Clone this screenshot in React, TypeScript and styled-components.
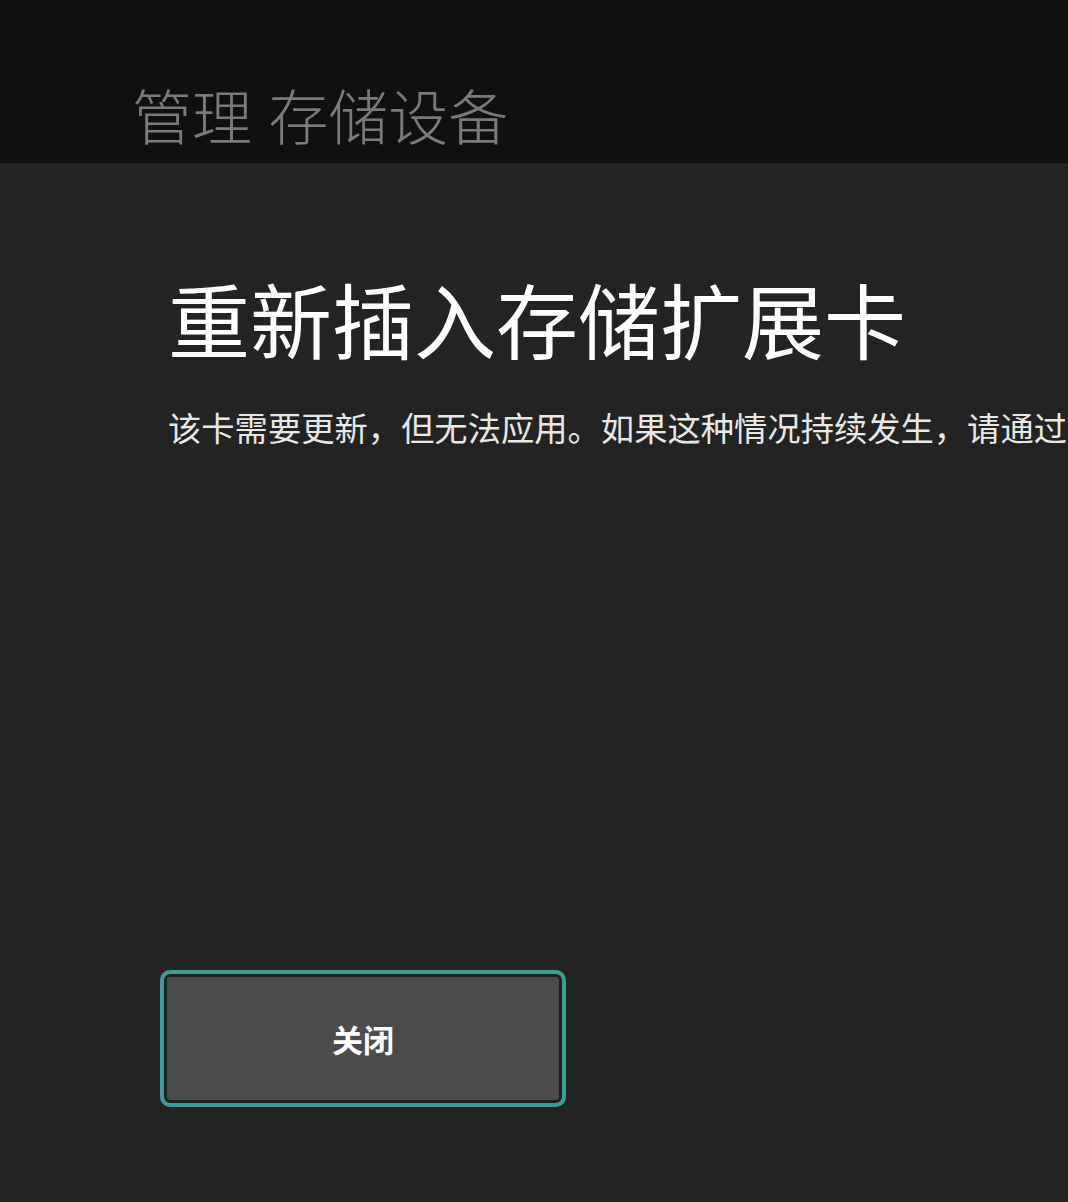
import React from "react";
import styled, { createGlobalStyle } from "styled-components";

const Global = createGlobalStyle`
  html, body { margin: 0; padding: 0; background: #232323; }
  body { font-family: "Noto Sans CJK SC", "Noto Sans", sans-serif; overflow: hidden; }
`;

const Page = styled.div`
  width: 1068px;
  height: 1202px;
  display: flex;
  flex-direction: column;
  background: #232323;
  overflow: hidden;
`;

const Header = styled.header`
  height: 163px;
  background: #101010;
  display: flex;
  align-items: flex-start;
  padding: 71px 0 0 132px;
  box-sizing: border-box;
`;

const HeaderTitle = styled.h1`
  margin: 0;
  font-size: 60px;
  line-height: 86px;
  font-weight: 300;
  color: #7a7a7a;
  white-space: nowrap;
  word-spacing: 3px;
`;

const Content = styled.main`
  flex: 1;
  display: flex;
  flex-direction: column;
  padding: 95px 0 0 168px;
  box-sizing: border-box;
`;

const Title = styled.h2`
  margin: 0;
  font-size: 82px;
  line-height: 120px;
  font-weight: 400;
  color: #ffffff;
  white-space: nowrap;
`;

const Message = styled.p`
  margin: 25px 0 0 0;
  font-size: 33.3px;
  line-height: 48px;
  color: #e8e8e8;
  white-space: nowrap;
`;

const Actions = styled.div`
  margin-top: 519px;
  margin-left: -8px;
`;

const Button = styled.button`
  width: 406px;
  height: 137px;
  border: 4px solid #3d9c9a;
  border-radius: 10px;
  background: #4b4b4b;
  box-shadow: inset 0 0 0 3px #1c2222;
  color: #ffffff;
  font-family: "Noto Sans CJK SC", sans-serif;
  font-size: 31px;
  font-weight: 700;
  display: flex;
  align-items: center;
  justify-content: center;
  padding: 0;
  cursor: pointer;
`;

export default function App() {
  return (
    <>
      <Global />
      <Page>
        <Header>
          <HeaderTitle>管理 存储设备</HeaderTitle>
        </Header>
        <Content>
          <Title>重新插入存储扩展卡</Title>
          <Message>该卡需要更新，但无法应用。如果这种情况持续发生，请通过</Message>
          <Actions>
            <Button>关闭</Button>
          </Actions>
        </Content>
      </Page>
    </>
  );
}
